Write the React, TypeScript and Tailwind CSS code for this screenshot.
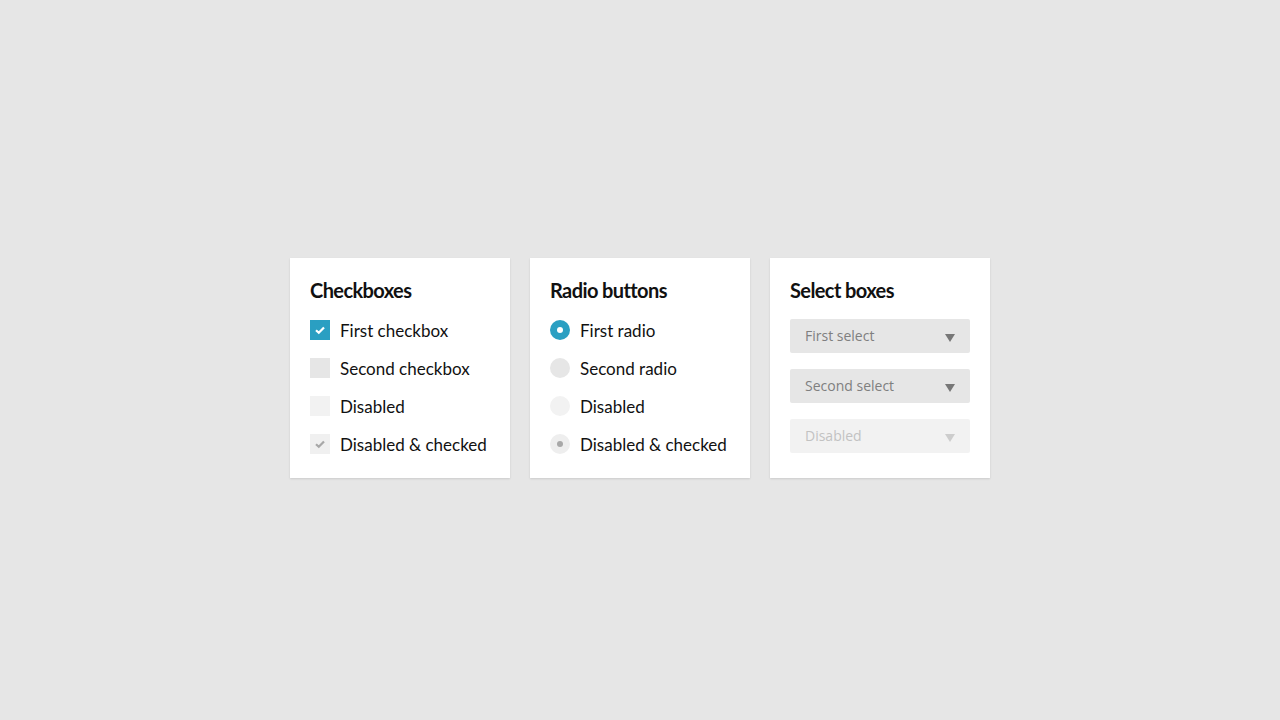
import React from "react";

const label =
  "whitespace-nowrap text-[17px] leading-none text-[#111] [font-family:Lato,'Liberation_Sans',sans-serif]";

function Check({ color, tick }: { color: string; tick?: string }) {
  return (
    <span className={`flex h-5 w-5 shrink-0 items-center justify-center ${color}`}>
      {tick && (
        <svg width="12" height="10" viewBox="0 0 12 10">
          <path d="M2 5.2 L4.8 7.8 L10 2.4" fill="none" stroke={tick} strokeWidth="2.2" />
        </svg>
      )}
    </span>
  );
}

function Radio({ color, dot }: { color: string; dot?: string }) {
  return (
    <span className={`flex h-5 w-5 shrink-0 items-center justify-center rounded-full ${color}`}>
      {dot && <span className={`h-[6px] w-[6px] rounded-full ${dot}`} />}
    </span>
  );
}

function Row({ icon, text }: { icon: React.ReactNode; text: string }) {
  return (
    <div className="flex h-5 items-center gap-[10px]">
      {icon}
      <span className={label}>{text}</span>
    </div>
  );
}

function Card({ title, children }: { title: string; children: React.ReactNode }) {
  return (
    <div className="flex h-[220px] w-[220px] flex-col bg-white px-5 pt-[22px] shadow-[0_1px_2px_rgba(0,0,0,0.12)]">
      <h2 className="whitespace-nowrap text-[20px] font-bold leading-none tracking-[-0.03em] text-[#111] [font-family:Lato,'Liberation_Sans',sans-serif]">
        {title}
      </h2>
      {children}
    </div>
  );
}

function Select({ text, disabled }: { text: string; disabled?: boolean }) {
  return (
    <div
      className={`flex h-[34px] w-[180px] items-center justify-between rounded-[2px] pl-[15px] pr-[15px] ${
        disabled ? "bg-[#f2f2f2]" : "bg-[#e6e6e6]"
      }`}
    >
      <span
        className={`text-[14px] leading-none [font-family:'Open_Sans',sans-serif] ${
          disabled ? "text-[#c2c2c2]" : "text-[#7f7f7f]"
        }`}
      >
        {text}
      </span>
      <svg width="10" height="8" viewBox="0 0 10 8" className="mt-[4px]">
        <path d="M0 0 L10 0 L5 8 Z" fill={disabled ? "#cdcdcd" : "#777"} />
      </svg>
    </div>
  );
}

export default function App() {
  return (
    <div className="flex h-[720px] w-full items-center justify-center gap-5 bg-[#e6e6e6] pt-4">
      <Card title="Checkboxes">
        <div className="mt-5 flex flex-col gap-[18px]">
          <Row icon={<Check color="bg-[#2a9fc2]" tick="#fff" />} text="First checkbox" />
          <Row icon={<Check color="bg-[#e6e6e6]" />} text="Second checkbox" />
          <Row icon={<Check color="bg-[#f2f2f2]" />} text="Disabled" />
          <Row icon={<Check color="bg-[#f0f0f0]" tick="#a8a8a8" />} text="Disabled & checked" />
        </div>
      </Card>
      <Card title="Radio buttons">
        <div className="mt-5 flex flex-col gap-[18px]">
          <Row icon={<Radio color="bg-[#2a9fc2]" dot="bg-white" />} text="First radio" />
          <Row icon={<Radio color="bg-[#e6e6e6]" />} text="Second radio" />
          <Row icon={<Radio color="bg-[#f2f2f2]" />} text="Disabled" />
          <Row icon={<Radio color="bg-[#eeeeee]" dot="bg-[#a8a8a8]" />} text="Disabled & checked" />
        </div>
      </Card>
      <Card title="Select boxes">
        <div className="mt-[19px] flex flex-col gap-4">
          <Select text="First select" />
          <Select text="Second select" />
          <Select text="Disabled" disabled />
        </div>
      </Card>
    </div>
  );
}
